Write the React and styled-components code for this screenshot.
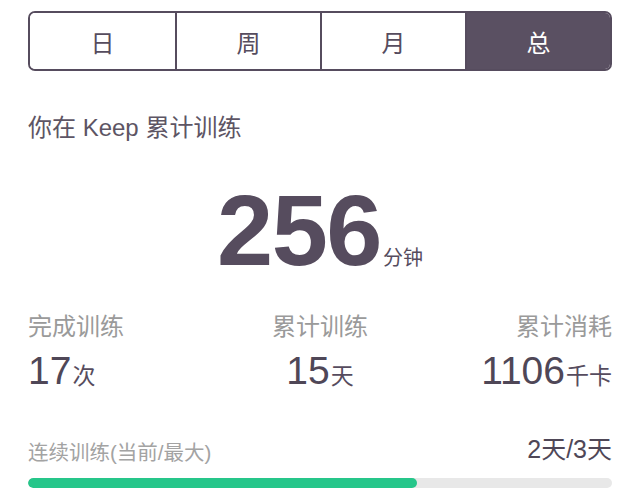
import styled, { createGlobalStyle } from 'styled-components';

const GlobalStyle = createGlobalStyle`
  body {
    margin: 0;
    background: #fff;
    font-family: "Liberation Sans", "Noto Sans CJK SC", sans-serif;
  }
`;

const Page = styled.div`
  padding: 11px 28px 0;
  color: #564c5e;
`;

const Tabs = styled.div`
  display: grid;
  grid-template-columns: repeat(4, 1fr);
  height: 60px;
  border: 2px solid #564c5e;
  border-radius: 7px;
  overflow: hidden;
  box-sizing: border-box;
`;

const Tab = styled.div`
  display: flex;
  align-items: center;
  justify-content: center;
  font-size: 24px;
  color: ${(p) => (p.$active ? '#fff' : '#564c5e')};
  background: ${(p) => (p.$active ? '#5a5062' : '#fff')};
  border-left: ${(p) => (p.$first ? 'none' : '2px solid #564c5e')};
`;

const Title = styled.div`
  margin-top: 43px;
  font-size: 24px;
  line-height: 28px;
  color: #5d5564;
`;

const Total = styled.div`
  display: flex;
  justify-content: center;
  align-items: baseline;
  margin-top: 38px;
  height: 100px;
`;

const BigNum = styled.span`
  font-size: 101px;
  font-weight: bold;
  letter-spacing: -1.5px;
  line-height: 100px;
  color: #564c5e;
`;

const Unit = styled.span`
  font-size: ${(p) => p.$size || 19}px;
  margin-left: ${(p) => p.$gap || 2}px;
  color: #564c5e;
`;

const Stats = styled.div`
  display: grid;
  grid-template-columns: 1fr 1fr 1fr;
  margin-top: 33px;
`;

const Stat = styled.div`
  text-align: ${(p) => p.$align};
`;

const Label = styled.div`
  font-size: 24px;
  line-height: 28px;
  color: #9a9a9a;
`;

const Value = styled.div`
  margin-top: 8px;
  font-size: 39px;
  line-height: 44px;
  color: #4f4757;
`;

const StreakRow = styled.div`
  display: flex;
  justify-content: space-between;
  align-items: flex-end;
  margin-top: 37px;
`;

const StreakLabel = styled.div`
  font-size: 20.5px;
  line-height: 24px;
  color: #a3a3a3;
`;

const StreakValue = styled.div`
  font-size: 25px;
  line-height: 28px;
  color: #4f4757;
  margin-bottom: 2px;
`;

const Track = styled.div`
  margin-top: 13px;
  height: 10px;
  border-radius: 5px;
  background: #e8e8e8;
  overflow: hidden;
`;

const Fill = styled.div`
  height: 100%;
  border-radius: 5px;
  background: #26c68a;
`;

const tabs = ['日', '周', '月', '总'];

const App = () => {
  const current = 2;
  const max = 3;
  return (
    <Page>
      <GlobalStyle />
      <Tabs>
        {tabs.map((t, i) => (
          <Tab key={t} $first={i === 0} $active={i === 3}>{t}</Tab>
        ))}
      </Tabs>
      <Title>你在 Keep 累计训练</Title>
      <Total>
        <BigNum>256</BigNum>
        <Unit $size={20} $gap={2}>分钟</Unit>
      </Total>
      <Stats>
        <Stat $align="left">
          <Label>完成训练</Label>
          <Value>17<Unit $size={23} $gap={1}>次</Unit></Value>
        </Stat>
        <Stat $align="center">
          <Label>累计训练</Label>
          <Value>15<Unit $size={23} $gap={1}>天</Unit></Value>
        </Stat>
        <Stat $align="right">
          <Label>累计消耗</Label>
          <Value>1106<Unit $size={23} $gap={1}>千卡</Unit></Value>
        </Stat>
      </Stats>
      <StreakRow>
        <StreakLabel>连续训练(当前/最大)</StreakLabel>
        <StreakValue>2天/3天</StreakValue>
      </StreakRow>
      <Track>
        <Fill style={{ width: `${(current / max) * 100}%` }} />
      </Track>
    </Page>
  );
};

export default App;
